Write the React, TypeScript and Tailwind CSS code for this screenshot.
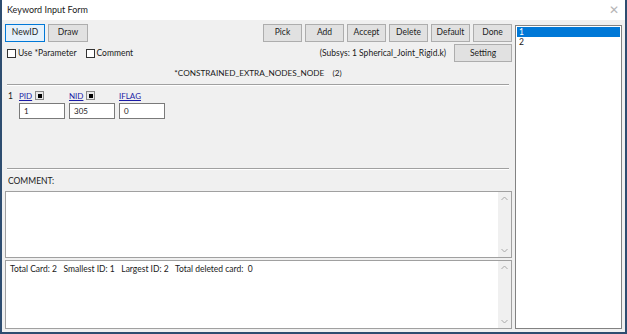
import React from 'react'

const rightButtons = ['Pick', 'Add', 'Accept', 'Delete', 'Default', 'Done']

const fields = [
  { label: 'PID', value: '1', pick: true },
  { label: 'NID', value: '305', pick: true },
  { label: 'IFLAG', value: '0', pick: false },
]

function Btn({ children, active, className = '' }: { children: React.ReactNode; active?: boolean; className?: string }) {
  return (
    <div
      className={`h-[18px] flex items-center justify-center border ${active ? 'border-[#0078d7] bg-[#e5f1fb]' : 'border-[#adadad] bg-[#e1e1e1]'} text-[#222] ${className}`}
    >
      {children}
    </div>
  )
}

function Check({ label }: { label: string }) {
  return (
    <div className="flex items-center gap-[2px]">
      <div className="w-[9px] h-[9px] border border-[#333] bg-white" />
      <span>{label}</span>
    </div>
  )
}

function Chevron({ up }: { up?: boolean }) {
  return (
    <svg width="7" height="5" viewBox="0 0 7 5">
      <path d={up ? 'M0.5 4 L3.5 1 L6.5 4' : 'M0.5 1 L3.5 4 L6.5 1'} fill="none" stroke="#a8a8a8" strokeWidth="1" />
    </svg>
  )
}

function ScrollBox({ children }: { children?: React.ReactNode }) {
  return (
    <div className="flex-1 flex border border-[#a0a0a0] bg-white">
      <div className="flex-1 px-[4px] pt-[2px]">{children}</div>
      <div className="w-[13px] bg-[#f0f0f0] flex flex-col items-center justify-between pt-[4px] pb-[4px]">
        <Chevron up />
        <Chevron />
      </div>
    </div>
  )
}

export default function App() {
  return (
    <div className="w-[627px] h-[334px] flex flex-col bg-white border-l-2 border-r-2 border-b-2 border-[#2e4d70] text-[8.5px] text-[#1a1a1a] overflow-hidden" style={{ fontFamily: 'Lato, "Noto Sans", sans-serif' }}>
      {/* Title bar */}
      <div className="h-[20px] flex items-center justify-between pl-[5px] pr-[6px] bg-white shrink-0">
        <span className="text-[9px]">Keyword Input Form</span>
        <span className="text-[#b5b5b5] text-[12px] leading-none">✕</span>
      </div>

      <div className="flex-1 flex bg-[#f0f0f0] min-h-0">
        {/* Left form */}
        <div className="w-[510px] flex flex-col pl-[2px] pb-[3px]">
          <div className="flex items-center h-[22px] pt-[3px] pl-[1px]">
            <div className="flex gap-[3px]">
              <Btn active className="w-[40px]">NewID</Btn>
              <Btn className="w-[40px]">Draw</Btn>
            </div>
            <div className="flex gap-[3px] ml-auto">
              {rightButtons.map((b) => (
                <Btn key={b} className="w-[39px]">{b}</Btn>
              ))}
            </div>
          </div>

          <div className="flex items-center h-[22px] pl-[3px]">
            <div className="flex gap-[9px]">
              <Check label="Use *Parameter" />
              <Check label="Comment" />
            </div>
            <span className="ml-auto mr-[8px]">(Subsys: 1 Spherical_Joint_Rigid.k)</span>
            <Btn className="w-[58px]">Setting</Btn>
          </div>

          <div className="h-[18px] flex items-center justify-center">
            <span className="whitespace-pre text-[8.2px]">*CONSTRAINED_EXTRA_NODES_NODE    (2)</span>
          </div>

          <div className="mx-[3px] mt-[2px] border-t border-[#a0a0a0] border-b border-b-white" />

          <div className="flex pl-[4px] pt-[3px] h-[82px]">
            <span className="w-[11px] pt-[1px]">1</span>
            <div className="flex gap-[4px]">
              {fields.map((f) => (
                <div key={f.label} className="flex flex-col gap-[1px]">
                  <div className="flex items-center gap-[3px] h-[13px]">
                    <span className="text-[#1a1aa6] underline text-[8px]">{f.label}</span>
                    {f.pick && (
                      <div className="w-[9px] h-[9px] border border-[#888] bg-[#e8e8e8] flex items-center justify-center">
                        <div className="w-[4px] h-[4px] bg-black" />
                      </div>
                    )}
                  </div>
                  <div className="w-[46px] h-[16px] border border-[#7a7a7a] bg-white flex items-center pl-[4px] text-[8px]">
                    {f.value}
                  </div>
                </div>
              ))}
            </div>
          </div>

          <div className="mx-[3px] border-t border-[#a0a0a0] border-b border-b-white" />

          <div className="h-[21px] flex items-center pl-[4px] pt-[2px]">COMMENT:</div>

          <div className="h-[67px] flex flex-col pl-[1px]">
            <ScrollBox />
          </div>
          <div className="h-[2px]" />
          <div className="flex-1 flex flex-col pl-[1px]">
            <ScrollBox>
              <span className="whitespace-pre">Total Card: 2   Smallest ID: 1   Largest ID: 2   Total deleted card:  0</span>
            </ScrollBox>
          </div>
        </div>

        {/* Right list */}
        <div className="flex-1 flex flex-col pl-[3px] pr-[3px] pt-[5px] pb-[3px]">
          <div className="flex-1 border border-[#828282] bg-white pt-[1px] text-[8.5px] leading-[10px]">
            <div className="bg-[#0078d7] text-white pl-[2px] mx-[1px]">1</div>
            <div className="pl-[3px]">2</div>
          </div>
        </div>
      </div>
    </div>
  )
}
